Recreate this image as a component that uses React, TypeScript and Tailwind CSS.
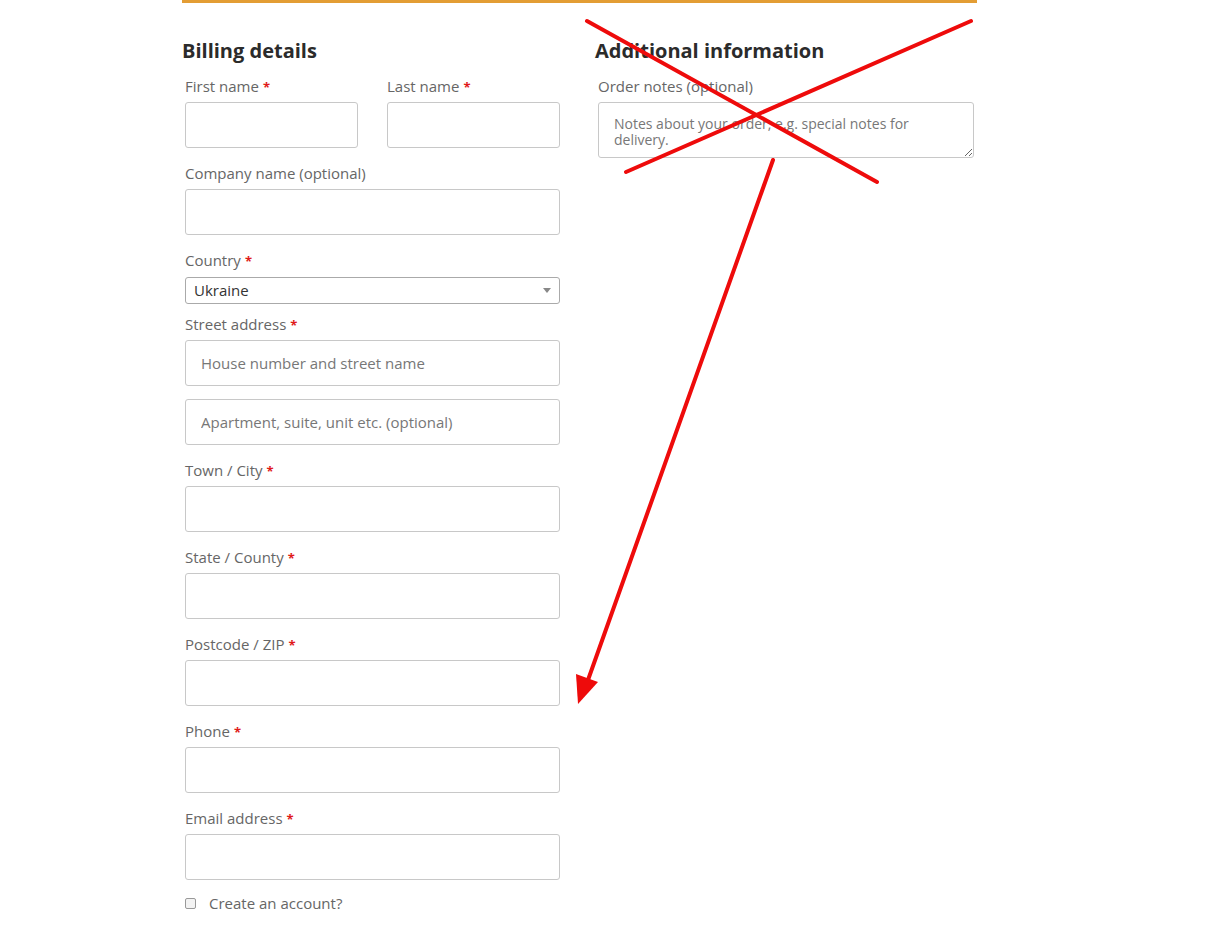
const font = { fontFamily: '"Open Sans", "Liberation Sans", sans-serif' };

function Label({ text, required = true, optional = false }: { text: string; required?: boolean; optional?: boolean }) {
  return (
    <label className="block h-6 leading-6 text-[15px] text-[#666]">
      {text}
      {optional && " (optional)"}
      {required && <span className="text-[#e01a1a] font-bold ml-1 text-[13px]">*</span>}
    </label>
  );
}

function Input({ placeholder }: { placeholder?: string }) {
  return (
    <input
      placeholder={placeholder}
      className="block w-full h-[46px] mt-1 border border-[#c8c8c8] rounded-[3px] px-[15px] text-[15px] text-[#333] placeholder:text-[#777] bg-white outline-none"
      style={font}
    />
  );
}

function Field({ label, optional = false, required = true }: { label: string; optional?: boolean; required?: boolean }) {
  return (
    <div className="mb-[13px]">
      <Label text={label} optional={optional} required={required} />
      <Input />
    </div>
  );
}

export default function App() {
  return (
    <div className="relative w-[1218px] h-[927px] bg-white overflow-hidden" style={font}>
      <div className="ml-[182px] w-[795px]">
        <div className="h-[3px] bg-[#e39d34]" />
        <div className="flex gap-8 pt-[35px]">
          {/* Billing */}
          <div className="w-[381px] px-[3px]">
            <h3 className="-ml-[3px] text-[20px] leading-[26px] font-bold text-[#2b2b2b] mb-[10px]">Billing details</h3>
            <div className="flex gap-[29px]">
              <div className="w-[173px] mb-[13px]">
                <Label text="First name" />
                <Input />
              </div>
              <div className="w-[173px] mb-[13px]">
                <Label text="Last name" />
                <Input />
              </div>
            </div>
            <Field label="Company name" optional required={false} />
            <div className="mb-[8px]">
              <Label text="Country" />
              <div className="mt-[5px] h-[27px] border border-[#aaa] rounded-[3px] flex items-center justify-between pl-2 pr-2 text-[15px] text-[#333]">
                <span>Ukraine</span>
                <svg width="8" height="5" viewBox="0 0 8 5">
                  <path d="M0 0h8L4 5z" fill="#888" />
                </svg>
              </div>
            </div>
            <div className="mb-[13px]">
              <Label text="Street address" />
              <Input placeholder="House number and street name" />
              <div className="h-[13px]" />
              <input
                placeholder="Apartment, suite, unit etc. (optional)"
                className="block w-full h-[46px] border border-[#c8c8c8] rounded-[3px] px-[15px] text-[15px] placeholder:text-[#777] outline-none"
                style={font}
              />
            </div>
            <Field label="Town / City" />
            <Field label="State / County" />
            <Field label="Postcode / ZIP" />
            <Field label="Phone" />
            <Field label="Email address" />
            <div className="flex items-center gap-[13px] -mt-[1px]">
              <span className="w-[11px] h-[11px] border border-[#999] rounded-[2px] bg-[#f3f3f3]" />
              <span className="text-[15px] text-[#666]">Create an account?</span>
            </div>
          </div>

          {/* Additional */}
          <div className="w-[382px] px-[3px]">
            <h3 className="-ml-[3px] text-[20px] leading-[26px] font-bold text-[#2b2b2b] mb-[10px]">Additional information</h3>
            <Label text="Order notes" optional required={false} />
            <textarea
              placeholder="Notes about your order, e.g. special notes for delivery."
              className="block w-full h-[56px] mt-1 border border-[#c8c8c8] rounded-[3px] px-[15px] py-[13px] text-[14px] leading-4 placeholder:text-[#777] outline-none resize-y"
              style={font}
            />
          </div>
        </div>
      </div>

      {/* red annotation */}
      <svg className="absolute inset-0 pointer-events-none" width="1218" height="927" viewBox="0 0 1218 927">
        <g stroke="#ee0b0b" strokeWidth="4" strokeLinecap="round" fill="none">
          <line x1="587" y1="21" x2="877" y2="182" />
          <line x1="971" y1="21" x2="626" y2="172" />
          <line x1="773" y1="160" x2="588" y2="680" />
        </g>
        <path d="M578 704 L576 674 L598 682 Z" fill="#ee0b0b" />
      </svg>
    </div>
  );
}
